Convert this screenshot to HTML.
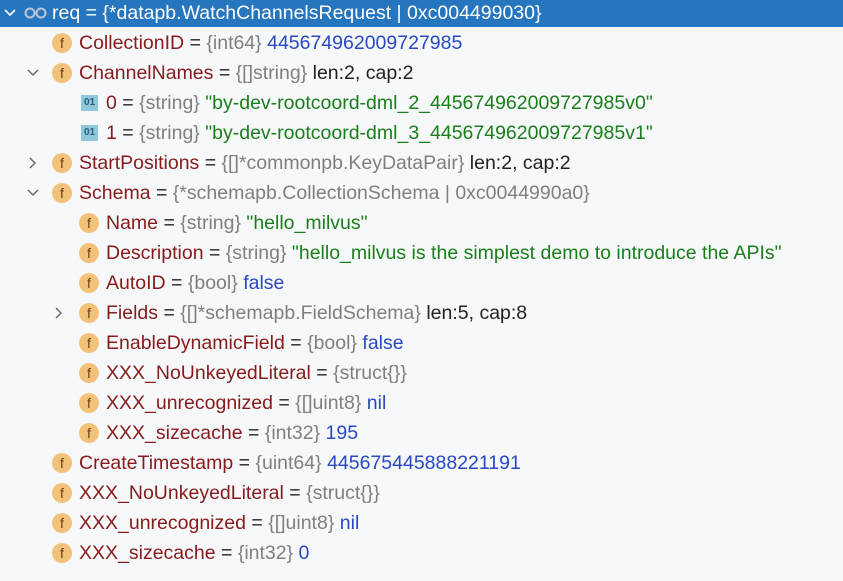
<!DOCTYPE html>
<html><head><meta charset="utf-8"><style>
body{margin:0;width:843px;height:581px;background:#f7f8fa;overflow:hidden;font-family:"Liberation Sans","Noto Sans CJK SC",sans-serif;font-size:19.5px;}
.r{position:absolute;left:0;right:0;height:30px;line-height:30px;white-space:nowrap;}
.sel{background:#2675bf;color:#fff;height:27px;line-height:27px;top:0;}
.t{position:absolute;top:0;}
.n{color:#871b1b}.g{color:#7f7f7f}.b{color:#2848c4}.s{color:#1a7f1a}.e{color:#222}
.f{position:absolute;top:5px;width:20px;height:20px;border-radius:50%;background:#f2c27a;color:#6a4010;font-size:14px;line-height:20px;text-align:center;font-family:"Liberation Sans",sans-serif}
.o{position:absolute;top:7px;width:17px;height:16px;background:#8fc7dc;color:#2c5d7a;font-size:10px;line-height:16px;text-align:center;font-weight:bold}
.a{position:absolute;top:9px;width:12px;height:12px}
</style></head><body>
<div class="r sel"><svg class="a" style="left:4px;top:7px" viewBox="0 0 12 12"><path d="M1 3 L6 8 L11 3" fill="none" stroke="#fff" stroke-width="1.6"/></svg>
<svg style="position:absolute;left:24px;top:7px" width="24" height="12" viewBox="0 0 24 12"><circle cx="6" cy="6" r="4.5" fill="none" stroke="#bcc6d4" stroke-width="2"/><circle cx="17" cy="6" r="4.5" fill="none" stroke="#bcc6d4" stroke-width="2"/></svg>
<span class="t" style="left:52px">req = {*datapb.WatchChannelsRequest | 0xc004499030}</span></div>

<div class="r" style="top:28px"><span class="f" style="left:52px">f</span><span class="t" style="left:79px"><span class="n">CollectionID</span> <span class="e">=</span> <span class="g">{int64}</span> <span class="b">445674962009727985</span></span></div>
<div class="r" style="top:58px"><svg class="a" style="left:27px" viewBox="0 0 12 12"><path d="M1 3 L6 8 L11 3" fill="none" stroke="#666" stroke-width="1.4"/></svg><span class="f" style="left:52px">f</span><span class="t" style="left:79px"><span class="n">ChannelNames</span> <span class="e">=</span> <span class="g">{[]string}</span> <span class="e">len:2, cap:2</span></span></div>
<div class="r" style="top:88px"><span class="o" style="left:81px">01</span><span class="t" style="left:106px"><span class="n">0</span> <span class="e">=</span> <span class="g">{string}</span> <span class="s">"by-dev-rootcoord-dml_2_445674962009727985v0"</span></span></div>
<div class="r" style="top:118px"><span class="o" style="left:81px">01</span><span class="t" style="left:106px"><span class="n">1</span> <span class="e">=</span> <span class="g">{string}</span> <span class="s">"by-dev-rootcoord-dml_3_445674962009727985v1"</span></span></div>
<div class="r" style="top:148px"><svg class="a" style="left:27px" viewBox="0 0 12 12"><path d="M3 1 L8 6 L3 11" fill="none" stroke="#666" stroke-width="1.4"/></svg><span class="f" style="left:52px">f</span><span class="t" style="left:79px"><span class="n">StartPositions</span> <span class="e">=</span> <span class="g">{[]*commonpb.KeyDataPair}</span> <span class="e">len:2, cap:2</span></span></div>
<div class="r" style="top:178px"><svg class="a" style="left:27px" viewBox="0 0 12 12"><path d="M1 3 L6 8 L11 3" fill="none" stroke="#666" stroke-width="1.4"/></svg><span class="f" style="left:52px">f</span><span class="t" style="left:79px"><span class="n">Schema</span> <span class="e">=</span> <span class="g">{*schemapb.CollectionSchema | 0xc0044990a0}</span></span></div>
<div class="r" style="top:208px"><span class="f" style="left:79px">f</span><span class="t" style="left:106px"><span class="n">Name</span> <span class="e">=</span> <span class="g">{string}</span> <span class="s">"hello_milvus"</span></span></div>
<div class="r" style="top:238px"><span class="f" style="left:79px">f</span><span class="t" style="left:106px"><span class="n">Description</span> <span class="e">=</span> <span class="g">{string}</span> <span class="s">"hello_milvus is the simplest demo to introduce the APIs"</span></span></div>
<div class="r" style="top:268px"><span class="f" style="left:79px">f</span><span class="t" style="left:106px"><span class="n">AutoID</span> <span class="e">=</span> <span class="g">{bool}</span> <span class="b">false</span></span></div>
<div class="r" style="top:298px"><svg class="a" style="left:53px" viewBox="0 0 12 12"><path d="M3 1 L8 6 L3 11" fill="none" stroke="#666" stroke-width="1.4"/></svg><span class="f" style="left:79px">f</span><span class="t" style="left:106px"><span class="n">Fields</span> <span class="e">=</span> <span class="g">{[]*schemapb.FieldSchema}</span> <span class="e">len:5, cap:8</span></span></div>
<div class="r" style="top:328px"><span class="f" style="left:79px">f</span><span class="t" style="left:106px"><span class="n">EnableDynamicField</span> <span class="e">=</span> <span class="g">{bool}</span> <span class="b">false</span></span></div>
<div class="r" style="top:358px"><span class="f" style="left:79px">f</span><span class="t" style="left:106px"><span class="n">XXX_NoUnkeyedLiteral</span> <span class="e">=</span> <span class="g">{struct{}}</span></span></div>
<div class="r" style="top:388px"><span class="f" style="left:79px">f</span><span class="t" style="left:106px"><span class="n">XXX_unrecognized</span> <span class="e">=</span> <span class="g">{[]uint8}</span> <span class="b">nil</span></span></div>
<div class="r" style="top:418px"><span class="f" style="left:79px">f</span><span class="t" style="left:106px"><span class="n">XXX_sizecache</span> <span class="e">=</span> <span class="g">{int32}</span> <span class="b">195</span></span></div>
<div class="r" style="top:448px"><span class="f" style="left:52px">f</span><span class="t" style="left:79px"><span class="n">CreateTimestamp</span> <span class="e">=</span> <span class="g">{uint64}</span> <span class="b">445675445888221191</span></span></div>
<div class="r" style="top:478px"><span class="f" style="left:52px">f</span><span class="t" style="left:79px"><span class="n">XXX_NoUnkeyedLiteral</span> <span class="e">=</span> <span class="g">{struct{}}</span></span></div>
<div class="r" style="top:508px"><span class="f" style="left:52px">f</span><span class="t" style="left:79px"><span class="n">XXX_unrecognized</span> <span class="e">=</span> <span class="g">{[]uint8}</span> <span class="b">nil</span></span></div>
<div class="r" style="top:538px"><span class="f" style="left:52px">f</span><span class="t" style="left:79px"><span class="n">XXX_sizecache</span> <span class="e">=</span> <span class="g">{int32}</span> <span class="b">0</span></span></div>
</body></html>
